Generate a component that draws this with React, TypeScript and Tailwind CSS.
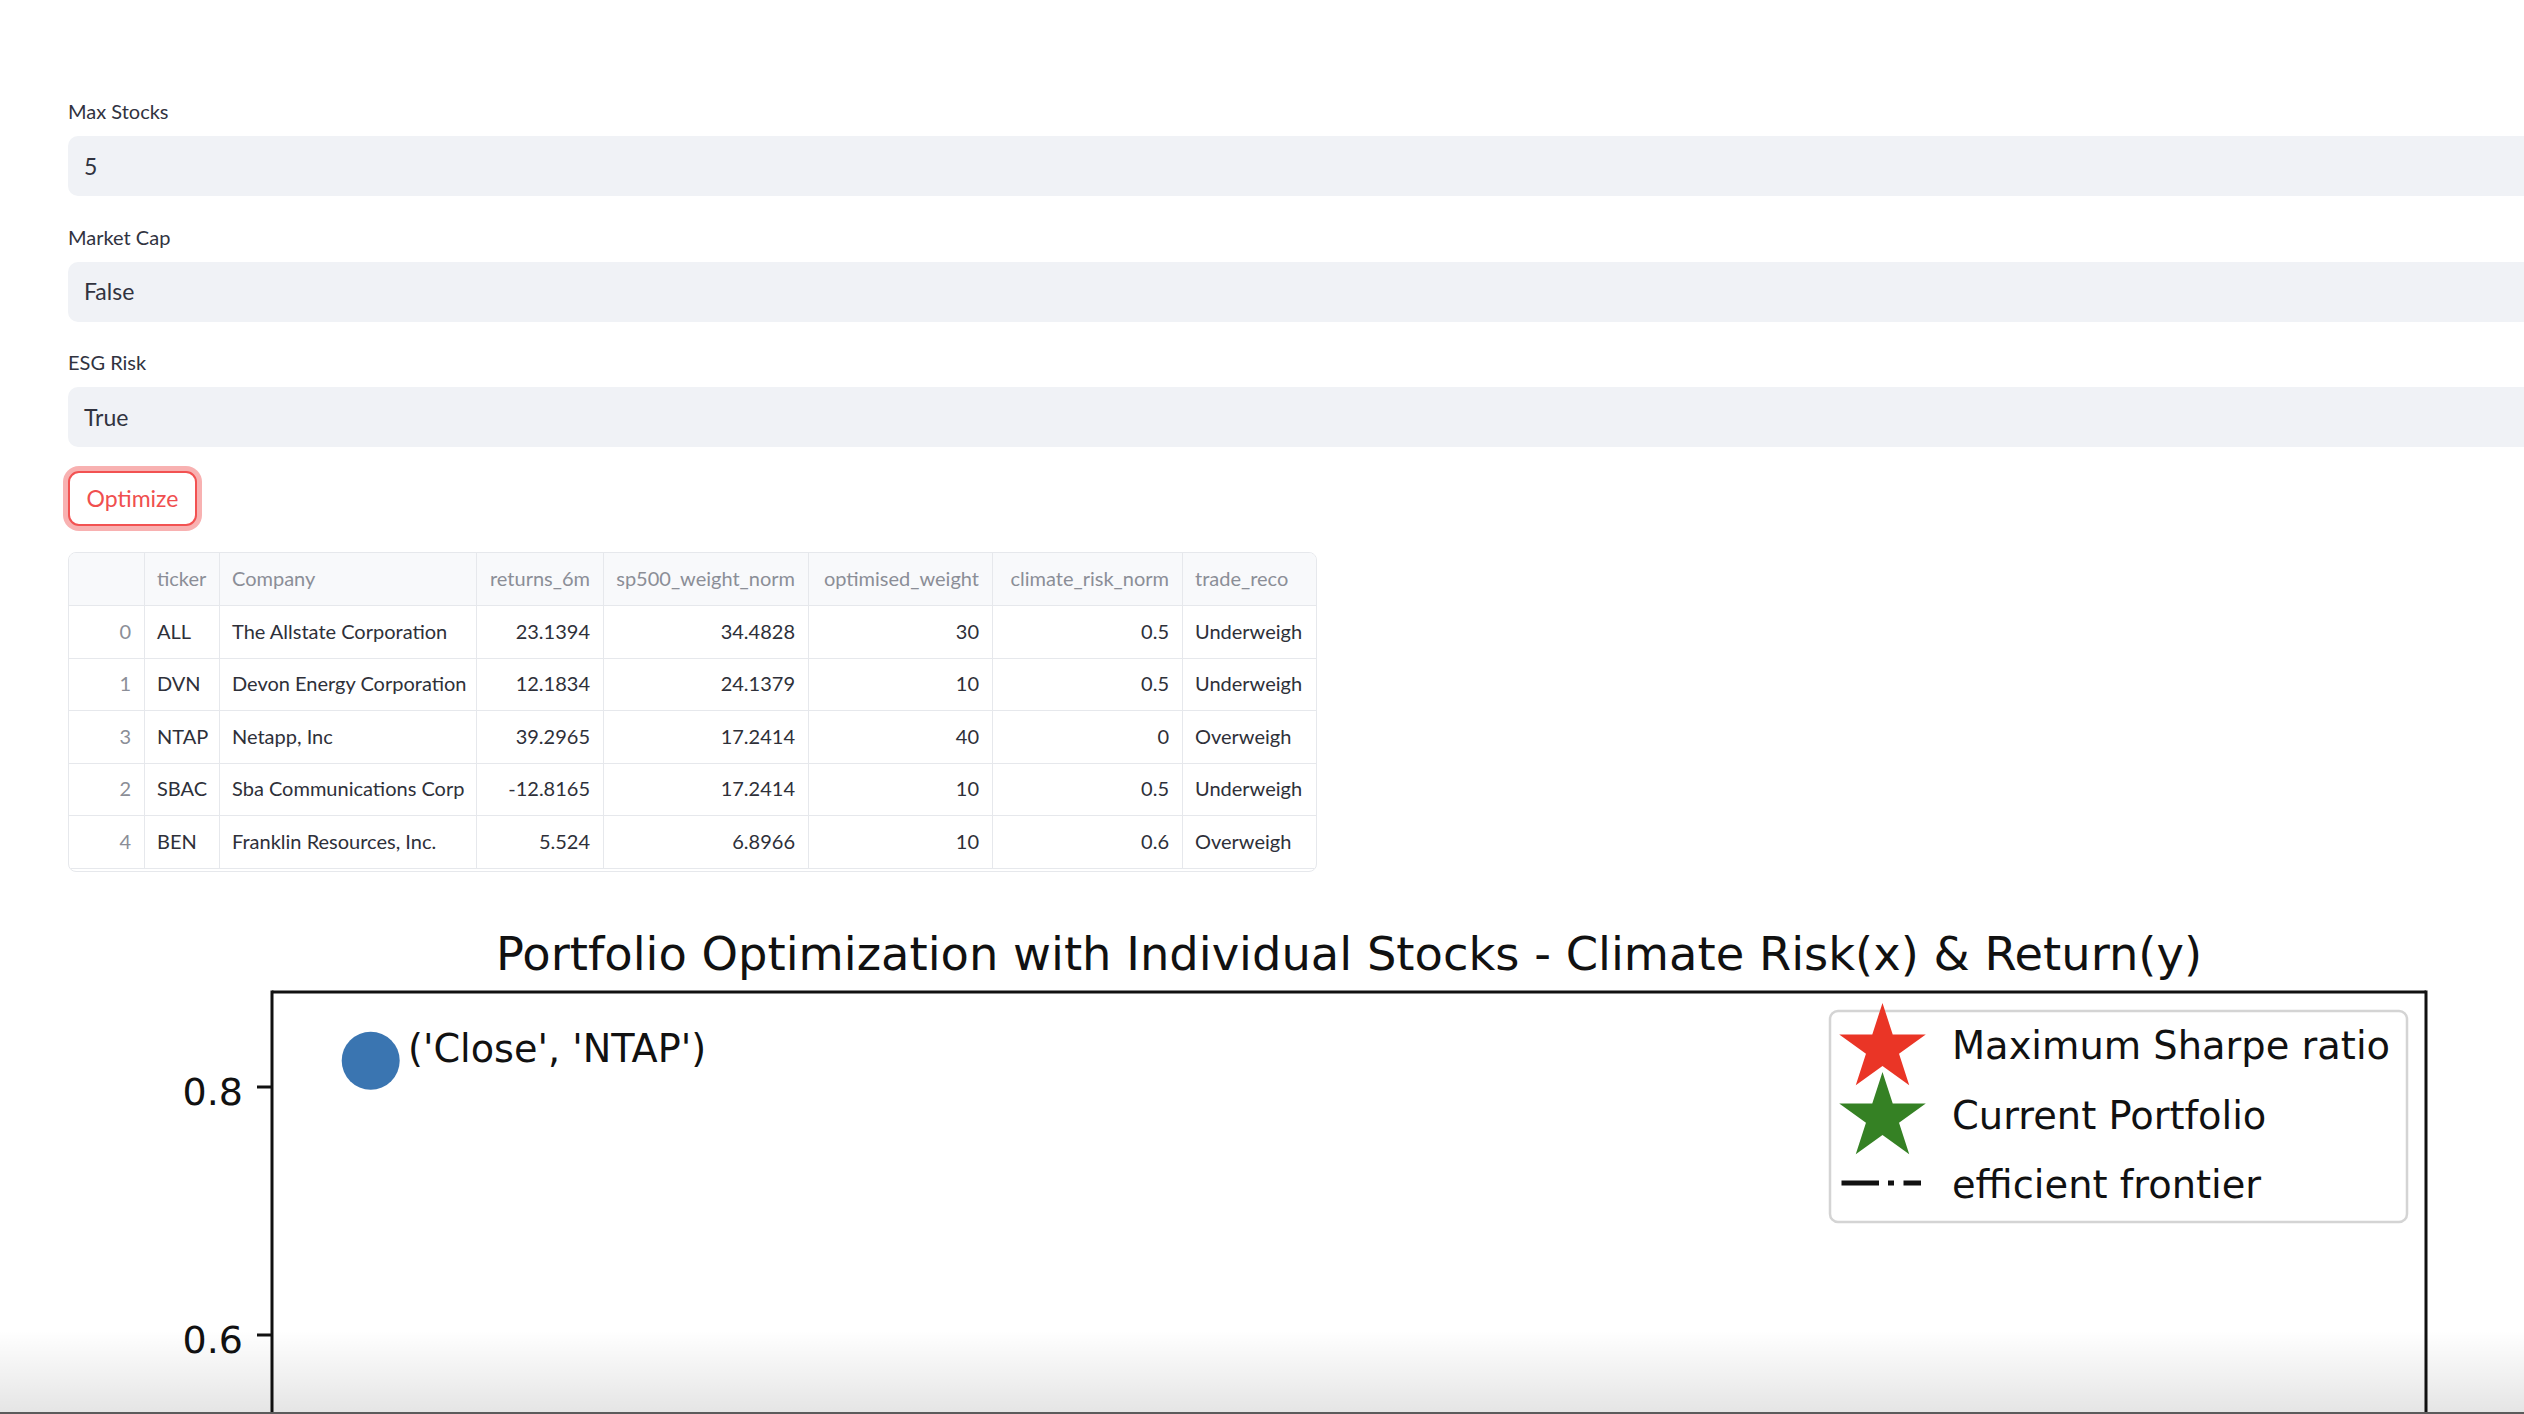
import React from "react";

const rows: string[][] = [
  ["0", "ALL", "The Allstate Corporation", "23.1394", "34.4828", "30", "0.5", "Underweigh"],
  ["1", "DVN", "Devon Energy Corporation", "12.1834", "24.1379", "10", "0.5", "Underweigh"],
  ["3", "NTAP", "Netapp, Inc", "39.2965", "17.2414", "40", "0", "Overweigh"],
  ["2", "SBAC", "Sba Communications Corp", "-12.8165", "17.2414", "10", "0.5", "Underweigh"],
  ["4", "BEN", "Franklin Resources, Inc.", "5.524", "6.8966", "10", "0.6", "Overweigh"],
];

const headers = ["", "ticker", "Company", "returns_6m", "sp500_weight_norm", "optimised_weight", "climate_risk_norm", "trade_reco"];

const colCls = [
  "w-[76px] justify-end pr-[13px] border-r",
  "w-[75px] justify-start pl-[12px] border-r",
  "w-[257px] justify-start pl-[12px] border-r",
  "w-[127px] justify-end pr-[13px] border-r",
  "w-[205px] justify-end pr-[13px] border-r",
  "w-[184px] justify-end pr-[13px] border-r",
  "w-[190px] justify-end pr-[13px] border-r",
  "w-[133px] justify-start pl-[12px]",
];

function starPoints(cx: number, cy: number, R: number): string {
  const r = R * 0.381966;
  const pts: string[] = [];
  for (let i = 0; i < 10; i++) {
    const a = ((-90 + i * 36) * Math.PI) / 180;
    const rad = i % 2 === 0 ? R : r;
    pts.push(`${(cx + rad * Math.cos(a)).toFixed(2)},${(cy + rad * Math.sin(a)).toFixed(2)}`);
  }
  return pts.join(" ");
}

function Field({ label, value }: { label: string; value: string }) {
  return (
    <div className="flex flex-col">
      <div className="h-[28px] leading-[28px] text-[20px] text-[#31333f]">{label}</div>
      <div className="mt-[11px] h-[60px] rounded-[10px] bg-[#f0f2f6] flex items-center pl-[16px] text-[23px] text-[#31333f]">
        {value}
      </div>
    </div>
  );
}

function Chart() {
  const font = "DejaVu Sans, sans-serif";
  return (
    <svg width={2456} height={530} viewBox="68 890 2456 530" className="block mt-[17px]">
      <text x={1349} y={971} fontFamily={font} fontSize={46.4} textAnchor="middle" fill="#111">
        Portfolio Optimization with Individual Stocks - Climate Risk(x) &amp; Return(y)
      </text>
      <line x1={272} y1={993} x2={2426} y2={993} stroke="#111" strokeWidth={3} />
      <line x1={272} y1={991.5} x2={272} y2={1420} stroke="#111" strokeWidth={3} />
      <line x1={2426} y1={991.5} x2={2426} y2={1420} stroke="#111" strokeWidth={3} />
      <line x1={257} y1={1088} x2={272} y2={1088} stroke="#111" strokeWidth={3} />
      <line x1={257} y1={1336} x2={272} y2={1336} stroke="#111" strokeWidth={3} />
      <text x={243} y={1106} fontFamily={font} fontSize={38} textAnchor="end" fill="#111">0.8</text>
      <text x={243} y={1354} fontFamily={font} fontSize={38} textAnchor="end" fill="#111">0.6</text>
      <circle cx={370.7} cy={1061.7} r={29} fill="#3a75b1" />
      <text x={408} y={1063} fontFamily={font} fontSize={38.2} fill="#111">('Close', 'NTAP')</text>
      <rect x={1830} y={1012} width={577} height={211} rx={8} fill="#ffffff" fillOpacity={0.85} stroke="#d4d4d4" strokeWidth={2.5} />
      <polygon points={starPoints(1882.5, 1049.5, 45.5)} fill="#ea3526" />
      <polygon points={starPoints(1882.5, 1118.5, 45.5)} fill="#358124" />
      <line x1={1841.5} y1={1184} x2={1921} y2={1184} stroke="#111" strokeWidth={5} strokeDasharray="37.5 9 6 9.5" />
      <text x={1952} y={1060} fontFamily={font} fontSize={38.4} fill="#111">Maximum Sharpe ratio</text>
      <text x={1952} y={1129.5} fontFamily={font} fontSize={38.4} fill="#111">Current Portfolio</text>
      <text x={1952} y={1199} fontFamily={font} fontSize={38.4} fill="#111">efficient frontier</text>
    </svg>
  );
}

export default function App() {
  return (
    <div className="relative h-[1414px] w-full overflow-hidden bg-white font-[Lato,sans-serif]">
      <div className="w-[2640px] pl-[68px] pt-[97px] flex flex-col">
        <div className="flex flex-col gap-[26.5px]">
          <Field label="Max Stocks" value="5" />
          <Field label="Market Cap" value="False" />
          <Field label="ESG Risk" value="True" />
        </div>

        <div className="mt-[24px]">
          <button className="h-[55px] w-[129px] rounded-[11px] border-2 border-[#f25252] bg-white text-[23px] text-[#f04f4f] shadow-[0_0_0_5px_rgba(242,100,100,0.5)] flex items-center justify-center">
            Optimize
          </button>
        </div>

        <div className="mt-[26px] w-fit rounded-[8px] border border-[#e6e8ec] overflow-hidden pb-[2px] text-[20px]">
          <div className="flex h-[53px] bg-[#f8f9fb] border-b border-[#e6e8ec] text-[#8b8e97]">
            {headers.map((h, i) => (
              <div key={i} className={`flex items-center h-full pb-[2px] border-[#e6e8ec] whitespace-nowrap overflow-hidden ${colCls[i]}`}>
                {h}
              </div>
            ))}
          </div>
          {rows.map((r, ri) => (
            <div key={ri} className="flex h-[52.5px] border-b border-[#e6e8ec] text-[#2e3039]">
              {r.map((c, ci) => (
                <div
                  key={ci}
                  className={`flex items-center h-full pb-[2px] border-[#e6e8ec] whitespace-nowrap overflow-hidden ${colCls[ci]} ${ci === 0 ? "text-[#8b8e97]" : ""}`}
                >
                  {c}
                </div>
              ))}
            </div>
          ))}
        </div>

        <Chart />
      </div>

      <div className="pointer-events-none absolute inset-x-0 bottom-0 h-[84px] bg-linear-to-b from-[rgba(0,0,0,0)] to-[rgba(0,0,0,0.1)] border-b-2 border-[#5b5b5b]" />
    </div>
  );
}
